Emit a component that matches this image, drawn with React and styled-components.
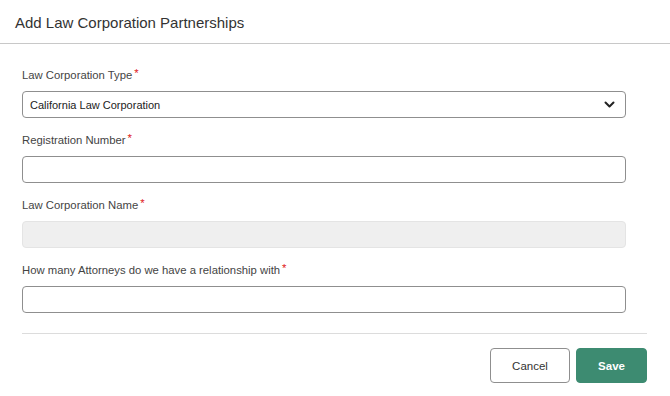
import React from 'react';
import styled, { createGlobalStyle } from 'styled-components';

const GlobalStyle = createGlobalStyle`
  html, body {
    margin: 0;
    padding: 0;
    background: #fff;
    font-family: "Liberation Sans", Arial, sans-serif;
  }
`;

const Modal = styled.div`
  width: 670px;
  height: 396px;
  background: #fff;
  box-sizing: border-box;
`;

const Header = styled.div`
  height: 43px;
  display: flex;
  align-items: center;
  padding: 0 15px;
  border-bottom: 1px solid #c8c8c8;
`;

const Title = styled.h2`
  margin: 0;
  font-size: 15px;
  font-weight: normal;
  color: #333;
  padding-top: 1px;
`;

const Body = styled.div`
  padding: 25px 23px 0 22px;
`;

const Form = styled.div`
  display: flex;
  flex-direction: column;
  gap: 16px;
  padding-right: 21px;
`;

const Field = styled.div`
  display: flex;
  flex-direction: column;
`;

const Label = styled.label`
  font-size: 11.3px;
  line-height: 13px;
  color: #444;
  margin-bottom: 9px;
`;

const Required = styled.span`
  color: #e02020;
  margin-left: 2px;
  position: relative;
  top: -2px;
`;

const Box = styled.div`
  height: 27px;
  box-sizing: border-box;
  border: 1px solid ${(p) => (p.disabled ? '#e4e4e4' : '#8f8f8f')};
  border-radius: 4px;
  background: ${(p) => (p.disabled ? '#efefef' : '#fff')};
  display: flex;
  align-items: center;
  justify-content: space-between;
  padding: 0 10px 0 7px;
  font-size: 11px;
  color: #222;
`;

const Divider = styled.div`
  margin-top: 20px;
  border-top: 1px solid #dcdcdc;
`;

const Footer = styled.div`
  display: flex;
  justify-content: flex-end;
  gap: 6px;
  padding-top: 14px;
`;

const Button = styled.button`
  height: 35px;
  width: ${(p) => (p.primary ? '71px' : '80px')};
  border-radius: 4px;
  font-family: "Liberation Sans", Arial, sans-serif;
  font-size: 11.5px;
  font-weight: ${(p) => (p.primary ? 'bold' : 'normal')};
  color: ${(p) => (p.primary ? '#fff' : '#333')};
  background: ${(p) => (p.primary ? '#3d8b71' : '#fff')};
  border: 1px solid ${(p) => (p.primary ? '#3d8b71' : '#8f8f8f')};
  cursor: pointer;
`;

const Chevron = () => (
  <svg width="11" height="7" viewBox="0 0 11 7">
    <path d="M1.5 1.5 L5.5 5.5 L9.5 1.5" fill="none" stroke="#222" strokeWidth="2" strokeLinecap="round" strokeLinejoin="round" />
  </svg>
);

const fields = [
  { label: 'Law Corporation Type', value: 'California Law Corporation', select: true },
  { label: 'Registration Number' },
  { label: 'Law Corporation Name', disabled: true },
  { label: 'How many Attorneys do we have a relationship with' },
];

export default function App() {
  return (
    <>
      <GlobalStyle />
      <Modal>
        <Header>
          <Title>Add Law Corporation Partnerships</Title>
        </Header>
        <Body>
          <Form>
            {fields.map((f) => (
              <Field key={f.label}>
                <Label>
                  {f.label}
                  <Required>*</Required>
                </Label>
                <Box disabled={f.disabled}>
                  <span>{f.value}</span>
                  {f.select && <Chevron />}
                </Box>
              </Field>
            ))}
          </Form>
          <Divider />
          <Footer>
            <Button>Cancel</Button>
            <Button primary>Save</Button>
          </Footer>
        </Body>
      </Modal>
    </>
  );
}
